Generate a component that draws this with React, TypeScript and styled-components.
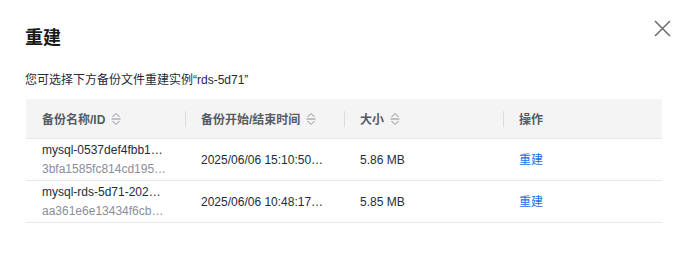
import React from "react";
import styled, { createGlobalStyle } from "styled-components";

const GlobalStyle = createGlobalStyle`
  body {
    margin: 0;
    background: #fff;
    font-family: "Liberation Sans", Arial, "Noto Sans CJK SC", sans-serif;
    color: #252b3a;
  }
`;

const Dialog = styled.div`
  width: 685px;
  height: 271px;
  box-sizing: border-box;
  padding: 26px 23px 0 26px;
  position: relative;
  background: #fff;
`;

const Title = styled.h2`
  margin: 0 0 0 -1px;
  font-size: 18px;
  line-height: 24px;
  font-weight: 700;
  color: #191919;
`;

const CloseButton = styled.button`
  position: absolute;
  top: 19px;
  right: 13px;
  width: 19px;
  height: 19px;
  padding: 0;
  border: 0;
  background: none;
  cursor: pointer;
  display: flex;
  align-items: center;
  justify-content: center;
`;

const Description = styled.p`
  margin: 21px 0 10px -1px;
  font-size: 12px;
  line-height: 18px;
  color: #252b3a;
`;

const Table = styled.div`
  width: 100%;
  font-size: 12px;
`;

const Row = styled.div<{ $head?: boolean }>`
  display: grid;
  grid-template-columns: repeat(4, 1fr);
  height: ${(p) => (p.$head ? "39px" : "41px")};
  background: ${(p) => (p.$head ? "#f4f4f4" : "#fff")};
  border-bottom: 1px solid #e9e9e9;
`;

const HeadCell = styled.div<{ $divider?: boolean }>`
  position: relative;
  display: flex;
  align-items: center;
  gap: 6px;
  padding: 0 16px;
  font-weight: 600;
  color: #555b66;

  &::before {
    content: "";
    display: ${(p) => (p.$divider ? "block" : "none")};
    position: absolute;
    left: 0;
    top: 12px;
    bottom: 11px;
    width: 1px;
    background: #dcdcdc;
  }
`;

const Cell = styled.div`
  display: flex;
  flex-direction: column;
  justify-content: center;
  padding: 1px 16px 0;
  min-width: 0;
  line-height: 19px;
`;

const Ellipsis = styled.span<{ $muted?: boolean }>`
  display: block;
  max-width: ${(p) => (p.$muted ? "127px" : "124px")};
  white-space: nowrap;
  overflow: hidden;
  text-overflow: ellipsis;
  color: ${(p) => (p.$muted ? "#8a8e99" : "#252b3a")};
`;

const Link = styled.a`
  color: #1a6fe6;
  text-decoration: none;
  cursor: pointer;
`;

const SortIcon = () => (
  <svg width="10" height="14" viewBox="0 0 10 14" fill="none" stroke="#8a8e99" strokeWidth="1">
    <path d="M1.5 5 L5 1.5 L8.5 5" />
    <path d="M0.5 7 H9.5" />
    <path d="M1.5 9 L5 12.5 L8.5 9" />
  </svg>
);

const rows = [
  {
    name: "mysql-0537def4fbb1a2c9",
    id: "3bfa1585fc814cd195e2a7",
    time: "2025/06/06 15:10:50-15:11:02",
    size: "5.86 MB",
  },
  {
    name: "mysql-rds-5d71-20250606",
    id: "aa361e6e13434f6cb8d1e0",
    time: "2025/06/06 10:48:17-10:48:29",
    size: "5.85 MB",
  },
];

export default function App() {
  return (
    <>
      <GlobalStyle />
      <Dialog>
        <Title>重建</Title>
        <CloseButton aria-label="关闭">
          <svg width="17" height="17" viewBox="0 0 17 17" stroke="#6b6b6b" strokeWidth="1.5">
            <path d="M1 1 L16 16 M16 1 L1 16" />
          </svg>
        </CloseButton>
        <Description>您可选择下方备份文件重建实例“rds-5d71”</Description>
        <Table>
          <Row $head>
            <HeadCell>
              备份名称/ID <SortIcon />
            </HeadCell>
            <HeadCell $divider>
              备份开始/结束时间 <SortIcon />
            </HeadCell>
            <HeadCell $divider>
              大小 <SortIcon />
            </HeadCell>
            <HeadCell $divider>操作</HeadCell>
          </Row>
          {rows.map((r) => (
            <Row key={r.id}>
              <Cell>
                <Ellipsis>{r.name}</Ellipsis>
                <Ellipsis $muted>{r.id}</Ellipsis>
              </Cell>
              <Cell>
                <Ellipsis>{r.time}</Ellipsis>
              </Cell>
              <Cell>{r.size}</Cell>
              <Cell>
                <Link>重建</Link>
              </Cell>
            </Row>
          ))}
        </Table>
      </Dialog>
    </>
  );
}
